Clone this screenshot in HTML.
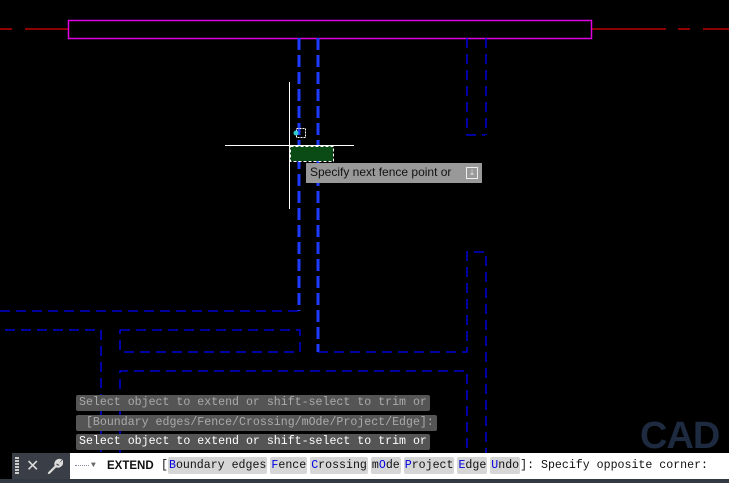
<!DOCTYPE html>
<html><head><style>
body{margin:0;width:729px;height:483px;background:#000;overflow:hidden;position:relative;font-family:"Liberation Mono",monospace}
.a{position:absolute}
.h{position:absolute;left:76px;height:16px;background:#555;font-size:11.6px;line-height:16px;padding:0 3px;border-radius:2px;white-space:pre}
.o{background:#d6d6d6;padding:2px 1px;border-radius:2px;margin-right:3px}
.b{color:#0000e0}
</style></head><body>
<svg class="a" style="left:0;top:0" width="729" height="483">
<g stroke="#e00000" stroke-width="1.3"><line x1="0" y1="29" x2="12" y2="29"/><line x1="25" y1="29" x2="68" y2="29"/><line x1="591" y1="29" x2="666" y2="29"/><line x1="678" y1="29" x2="690" y2="29"/><line x1="703" y1="29" x2="729" y2="29"/></g>
<rect x="68.5" y="20.5" width="523" height="18" fill="none" stroke="#e000e0" stroke-width="1.5"/>
<g stroke="#0000ff" stroke-width="1.3" fill="none" stroke-dasharray="10 6">
<path d="M467 38V135H485M486 38V135"/>
<path d="M0 311H300"/>
<path d="M5 330H101V453"/>
<path d="M120 330H300V352H120Z"/>
<path d="M318 352H467V252H486V453"/>
<path d="M120 453V371H467V453"/>
</g>
<g stroke="#1e3cff" stroke-width="3" stroke-dasharray="12 5" fill="none">
<line x1="299" y1="38" x2="299" y2="311"/>
<line x1="318" y1="38" x2="318" y2="352"/>
</g>
<rect x="290" y="146" width="43" height="15" fill="#0a4a14"/>
<rect x="290.5" y="146.5" width="43" height="15" fill="none" stroke="#fff" stroke-dasharray="3 2"/>
<line x1="225" y1="145.5" x2="354" y2="145.5" stroke="#fff"/>
<line x1="289.5" y1="82" x2="289.5" y2="209" stroke="#fff"/>
<rect x="296.5" y="128.5" width="9" height="9" fill="none" stroke="#fff" stroke-dasharray="2 1"/>
<circle cx="296" cy="133" r="2.5" fill="#3cc"/>
</svg>
<div class="a" style="left:306px;top:163px;width:176px;height:20px;background:#999;font-family:'Liberation Sans',sans-serif;font-size:12px;line-height:19px;color:#111;padding-left:4px;box-sizing:border-box">Specify next fence point or<span style="position:absolute;right:4px;top:4px;width:10px;height:10px;border:1px solid #eee;font-size:8px;line-height:10px;text-align:center;color:#eee">⤓</span></div>
<div class="a" style="left:640px;top:415px;font:bold 38px 'Liberation Sans',sans-serif;color:#1d2a3f;letter-spacing:-1px">CAD</div>
<div class="h" style="top:395px;color:#aaa">Select object to extend or shift-select to trim or</div>
<div class="h" style="top:415px;color:#aaa"> [Boundary edges/Fence/Crossing/mOde/Project/Edge]:</div>
<div class="h" style="top:434px;color:#fff">Select object to extend or shift-select to trim or</div>
<div class="a" style="left:0;top:479px;width:729px;height:4px;background:#333a44"></div>
<div class="a" style="left:12px;top:453px;width:58px;height:26px;background:#3a3f47;color:#ddd;font:16px 'Liberation Sans',sans-serif">
<span class="a" style="left:3px;top:4px;width:4px;height:18px;background:repeating-linear-gradient(#ccc 0 2px,transparent 2px 3px)"></span>
<span class="a" style="left:14px;top:3px">✕</span>
<svg class="a" style="left:35px;top:5px" width="16" height="16" viewBox="0 0 16 16"><path d="M2 15L9 8M9 8A4 4 0 0 1 13 2L11 5L13 6L15 4A4 4 0 0 1 9 8" stroke="#ddd" stroke-width="2.2" fill="none" stroke-linecap="round"/></svg></div>
<div class="a" style="left:70px;top:453px;width:659px;height:26px;background:#fff;font-size:11.6px;line-height:26px;white-space:pre;color:#111">
<span class="a" style="left:5px;top:12px;width:14px;border-top:1px dotted #88a"></span>
<span class="a" style="left:21px;top:0;font-size:8px;color:#666">▼</span>
<span class="a" style="left:37px;top:0"><b style="font-family:'Liberation Sans',sans-serif;font-size:11.5px">EXTEND</b></span>
<span class="a" style="left:91px;top:0">[<span class="o"><span class="b">B</span>oundary edges</span><span class="o"><span class="b">F</span>ence</span><span class="o"><span class="b">C</span>rossing</span><span class="o">m<span class="b">O</span>de</span><span class="o"><span class="b">P</span>roject</span><span class="o"><span class="b">E</span>dge</span><span class="o" style="margin-right:0"><span class="b">U</span>ndo</span>]: Specify opposite corner:</span>
</div>
</body></html>
